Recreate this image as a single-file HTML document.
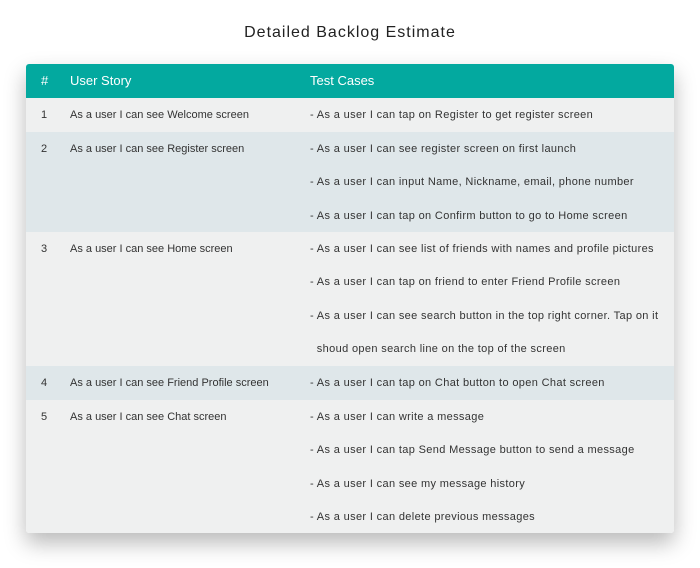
<!DOCTYPE html>
<html><head><style>
body{margin:0;width:700px;height:568px;background:#fff;font-family:"Liberation Sans",sans-serif;position:relative;overflow:hidden}
h1{position:absolute;top:24px;left:0;width:700px;text-align:center;margin:0;font-weight:normal;font-size:16px;color:#222;letter-spacing:1px}
.t{position:absolute;left:26px;top:64px;width:648px;border-radius:3px;box-shadow:0 10px 22px rgba(0,0,0,0.28);overflow:hidden}
.h{background:#03a99f;height:34px;color:#fff;font-size:13px;position:relative}
.r{position:relative;font-size:11px;color:#333;white-space:nowrap}
.a{background:#eff0f0}.b{background:#dfe7ea}
.c1{position:absolute;left:15px}.c2{position:absolute;left:44px}.c3{position:absolute;left:284px;letter-spacing:0.35px}
.l{height:33.4px;line-height:35px}
.h span{line-height:34px}
</style></head><body>
<h1>Detailed Backlog Estimate</h1>
<div class="t">
<div class="h"><span class="c1">#</span><span class="c2">User Story</span><span class="c3" style="letter-spacing:0">Test Cases</span></div>
<div class="r a" style="height:34px"><div class="c1 l">1</div><div class="c2 l">As a user I can see Welcome screen</div><div class="c3"><div class="l">- As a user I can tap on Register to get register screen</div></div></div>
<div class="r b" style="height:100px"><div class="c1 l">2</div><div class="c2 l">As a user I can see Register screen</div><div class="c3"><div class="l">- As a user I can see register screen on first launch</div><div class="l">- As a user I can input Name, Nickname, email, phone number</div><div class="l">- As a user I can tap on Confirm button to go to Home screen</div></div></div>
<div class="r a" style="height:134px"><div class="c1 l">3</div><div class="c2 l">As a user I can see Home screen</div><div class="c3"><div class="l">- As a user I can see list of friends with names and profile pictures</div><div class="l">- As a user I can tap on friend to enter Friend Profile screen</div><div class="l">- As a user I can see search button in the top right corner. Tap on it</div><div class="l">&nbsp;&nbsp;shoud open search line on the top of the screen</div></div></div>
<div class="r b" style="height:34px"><div class="c1 l">4</div><div class="c2 l">As a user I can see Friend Profile screen</div><div class="c3"><div class="l">- As a user I can tap on Chat button to open Chat screen</div></div></div>
<div class="r a" style="height:133px"><div class="c1 l">5</div><div class="c2 l">As a user I can see Chat screen</div><div class="c3"><div class="l">- As a user I can write a message</div><div class="l">- As a user I can tap Send Message button to send a message</div><div class="l">- As a user I can see my message history</div><div class="l">- As a user I can delete previous messages</div></div></div>
</div>
</body></html>
